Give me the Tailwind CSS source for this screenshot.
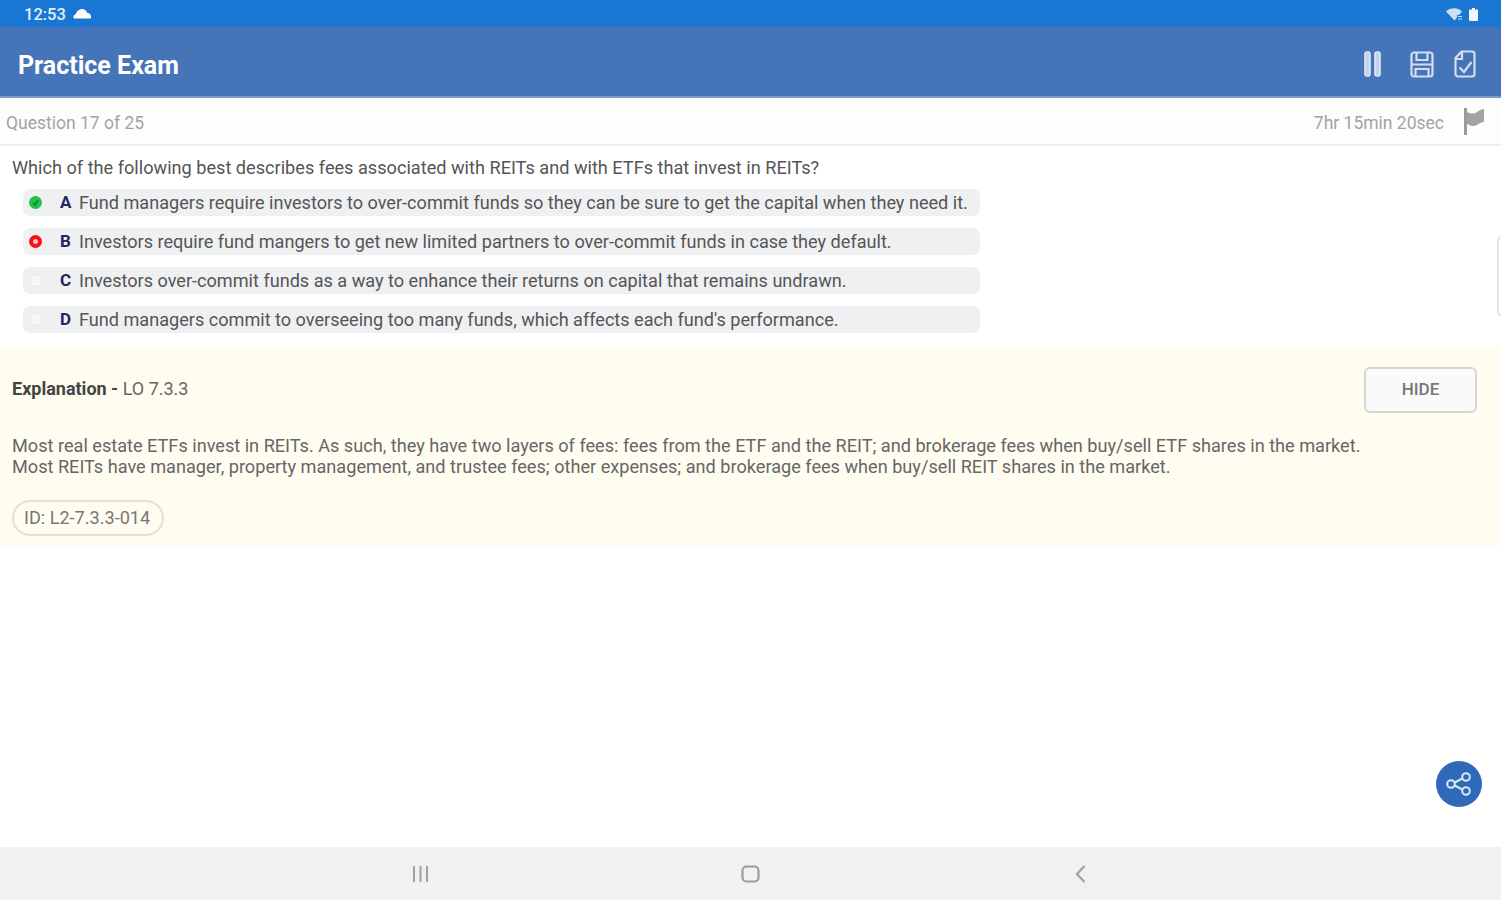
<!DOCTYPE html>
<html lang="en">
<head>
    <meta charset="UTF-8">
    <title>Practice Exam</title>
    <script src="https://cdn.jsdelivr.net/npm/@tailwindcss/browser@4"></script>
</head>
<body class="bg-white font-['Roboto',sans-serif] h-[900px] w-full overflow-hidden relative flex flex-col">
    <!-- Status bar -->
    <div class="h-[27px] bg-[#1976d2] flex items-center justify-between pl-[24px] pr-[23px] text-white shrink-0">
        <div class="flex items-center gap-[7px]">
            <span class="text-[16.5px] leading-none text-[#e3eefa] font-medium pt-[3px]">12:53</span>
            <svg class="w-[19px] h-[11px]" viewBox="0 0 19 11"><path fill="#fff" d="M1 10.5c-1.2-1.8-.4-4 1.8-4.300C3.600 3.400 6 1 9 1c2.600 0 4.700 1.700 5.300 4 2.400-.2 4.300 1.900 3.700 5.500z"/></svg>
        </div>
        <div class="flex items-center gap-[6px] pt-[1px]">
            <svg class="w-[17px] h-[13px]" viewBox="0 0 17 13"><path fill="#cfdff2" d="M0 3.500C4.500-.8 11.500-.8 16 3.500l-7.500 9z"/><path fill="#1976d2" d="M11 7h6v6h-6z"/><path fill="#cfdff2" d="M12 8h4v1h-4zM12 10.500h4v1h-4z"/></svg>
            <svg class="w-[9px] h-[13px]" viewBox="0 0 9 13"><path fill="#f2f6fb" d="M3 0h3v1.500h2a1 1 0 0 1 1 1V12a1 1 0 0 1-1 1H1a1 1 0 0 1-1-1V2.500a1 1 0 0 1 1-1h2z"/></svg>
        </div>
    </div>

    <!-- Header -->
    <header class="h-[71px] bg-[#4674b8] border-b-2 border-[#7d9acb] flex items-center justify-between pl-[18px] pr-[25px] shrink-0">
        <h1 class="text-[25px] font-bold text-white leading-none pt-[7px]">Practice Exam</h1>
        <div class="flex items-center text-[#d3ddee] pt-[5px]">
            <svg class="w-[20px] h-[28px]" viewBox="0 0 20 28" fill="#c3d1e8" stroke="#e4eaf5" stroke-width="1.500"><rect x="2" y="2" width="5" height="24" rx="2"/><rect x="12" y="2" width="5" height="24" rx="2"/></svg>
            <svg class="w-[24px] h-[27px] ml-[27px]" viewBox="0 0 24 27" fill="none" stroke="currentColor" stroke-width="2.200"><rect x="1.500" y="1.500" width="21" height="24" rx="2.500"/><path d="M6.500 2v7h11V2M5.500 25v-7h13v7M1.500 13.500h21"/></svg>
            <svg class="w-[22px] h-[28px] ml-[20px]" viewBox="0 0 22 28" fill="none" stroke="currentColor" stroke-width="2.200"><path d="M7.500 1.500h11a2.500 2.500 0 0 1 2 2.500v20a2.500 2.500 0 0 1-2.500 2.500H4A2.500 2.500 0 0 1 1.500 24V8z"/><path d="M1.500 9h6.500V2M5.500 17.500l4.500 4.500 7.500-10"/></svg>
        </div>
    </header>

    <!-- Question bar -->
    <div class="h-[48px] bg-[#fdfdfd] border-b-2 border-[#eeeeee] flex items-center justify-between pl-[6px] pr-[16px] shrink-0">
        <span class="text-[17.500px] text-[#a3a3a3] leading-none pt-[5px]">Question 17 of 25</span>
        <div class="flex items-center gap-[19px]">
            <span class="text-[17.500px] text-[#a3a3a3] leading-none pt-[5px]">7hr 15min 20sec</span>
            <svg class="w-[22px] h-[29px]" viewBox="0 0 22 29"><path fill="#9a9a9a" d="M1 1h3v27H1z"/><path fill="#a3a3a3" d="M4 5c5 2 7 2 10 0s5-3 7-3v13c-3 0-4 1-7 3s-6 1-10-1z"/></svg>
        </div>
    </div>

    <!-- Question -->
    <main class="flex-1 flex flex-col min-h-0">
        <p class="pl-[12px] pt-[11px] text-[18.150px] leading-[22px] text-[#555555]">Which of the following best describes fees associated with REITs and with ETFs that invest in REITs?</p>
        <div class="flex flex-col gap-[12px] mt-[10px] ml-[23px] w-[957px]">
            <div class="h-[27px] rounded-[7px] bg-[#eff0f2] flex items-center pl-[6px] text-[18.100px] text-[#555555]">
                <span class="w-[13px] h-[13px] rounded-full bg-[#1fc24a] flex items-center justify-center shrink-0">
                    <svg class="w-[9px] h-[9px]" viewBox="0 0 9 9" fill="none" stroke="#0f7d2d" stroke-width="1.500"><path d="M2 5l2 2 3-5"/></svg>
                </span>
                <span class="ml-[18px] w-[19px] font-bold text-[#23265f] text-[17px] shrink-0">A</span>
                <span class="truncate">Fund managers require investors to over-commit funds so they can be sure to get the capital when they need it.</span>
            </div>
            <div class="h-[27px] rounded-[7px] bg-[#eff0f2] flex items-center pl-[6px] text-[18.100px] text-[#555555]">
                <span class="w-[13px] h-[13px] rounded-full bg-[#f5101c] flex items-center justify-center shrink-0">
                    <span class="w-[5px] h-[5px] rounded-full bg-[#f7c4c6]"></span>
                </span>
                <span class="ml-[18px] w-[19px] font-bold text-[#23265f] text-[17px] shrink-0">B</span>
                <span class="truncate">Investors require fund mangers to get new limited partners to over-commit funds in case they default.</span>
            </div>
            <div class="h-[27px] rounded-[7px] bg-[#eff0f2] flex items-center pl-[6px] text-[18.100px] text-[#555555]">
                <span class="w-[13px] h-[13px] rounded-full bg-[#f6f7f8] border border-[#e6e7e9] shrink-0"></span>
                <span class="ml-[18px] w-[19px] font-bold text-[#23265f] text-[17px] shrink-0">C</span>
                <span class="truncate">Investors over-commit funds as a way to enhance their returns on capital that remains undrawn.</span>
            </div>
            <div class="h-[27px] rounded-[7px] bg-[#eff0f2] flex items-center pl-[6px] text-[18.100px] text-[#555555]">
                <span class="w-[13px] h-[13px] rounded-full bg-[#f6f7f8] border border-[#e6e7e9] shrink-0"></span>
                <span class="ml-[18px] w-[19px] font-bold text-[#23265f] text-[17px] shrink-0">D</span>
                <span class="truncate">Fund managers commit to overseeing too many funds, which affects each fund's performance.</span>
            </div>
        </div>

        <!-- Explanation -->
        <section class="mt-[13px] h-[200px] bg-[#fffdf0] pl-[12px] pr-[24px] shrink-0">
            <div class="flex items-center justify-between pt-[21px]">
                <p class="text-[18px] leading-[44px] text-[#666666] mb-[2px]"><span class="font-bold text-[#444444]">Explanation - </span>LO 7.3.3</p>
                <button class="w-[113px] h-[46px] rounded-[6px] border-2 border-[#d6d6d2] bg-[#fafafa] text-[17px] text-[#777777] font-medium">HIDE</button>
            </div>
            <p class="mt-[22px] text-[18.140px] leading-[21px] text-[#666666]">Most real estate ETFs invest in REITs. As such, they have two layers of fees: fees from the ETF and the REIT; and brokerage fees when buy/sell ETF shares in the market.<br>Most REITs have manager, property management, and trustee fees; other expenses; and brokerage fees when buy/sell REIT shares in the market.</p>
            <span class="inline-flex items-center mt-[23px] h-[36px] pl-[10px] pr-[12px] pb-[1px] rounded-full border-2 border-[#e3e2d8] text-[18.100px] text-[#777777]">ID: L2-7.3.3-014</span>
        </section>
    </main>

    <!-- Nav bar -->
    <nav class="h-[53px] bg-[#f1f1f1] shrink-0 flex justify-center">
        <div class="w-[990px] grid grid-cols-3">
            <div class="flex items-center justify-center">
                <svg class="w-[17px] h-[16px]" viewBox="0 0 17 16" stroke="#a0a0a0" stroke-width="2"><path d="M2 0v16M8.500 0v16M15 0v16"/></svg>
            </div>
            <div class="flex items-center justify-center">
                <svg class="w-[19px] h-[18px]" viewBox="0 0 19 18" fill="none" stroke="#9c9c9c" stroke-width="2.200"><rect x="1.500" y="1.500" width="16" height="15" rx="4"/></svg>
            </div>
            <div class="flex items-center justify-center">
                <svg class="w-[11px] h-[18px]" viewBox="0 0 11 18" fill="none" stroke="#a0a0a0" stroke-width="2.200"><path d="M9.500 1L2 9l7.500 8"/></svg>
            </div>
        </div>
    </nav>

    <!-- Side handle -->
    <div class="absolute top-[236px] right-[-10px] w-[14px] h-[81px] rounded-[6px] border-2 border-[#e4e4e4] bg-white"></div>

    <!-- Share button -->
    <button class="absolute top-[761px] left-[1436px] w-[46px] h-[46px] rounded-full bg-[#2f6ab8] flex items-center justify-center">
        <svg class="w-[28px] h-[26px]" viewBox="0 0 28 26" fill="none" stroke="#dbe6f4" stroke-width="2"><circle cx="21" cy="6" r="3.800"/><circle cx="6" cy="13" r="3.800"/><circle cx="21" cy="20" r="3.800"/><path d="M9.500 11.500l8-4M9.500 14.500l8 4"/></svg>
    </button>
</body>
</html>
